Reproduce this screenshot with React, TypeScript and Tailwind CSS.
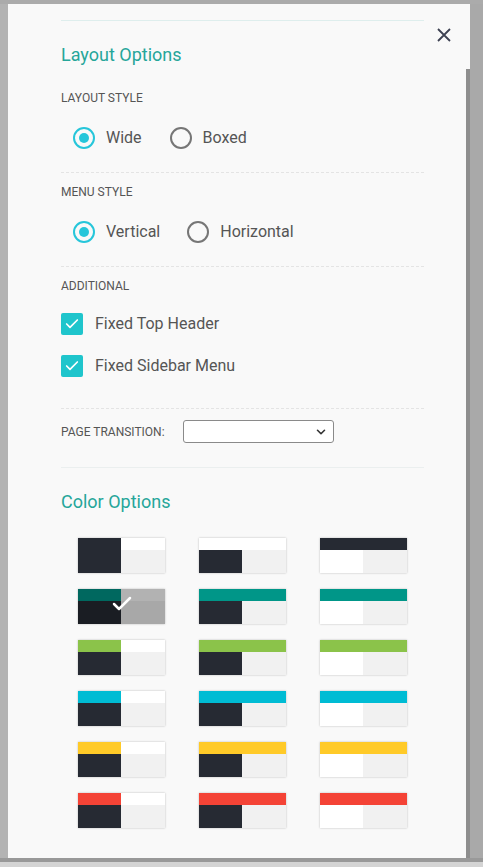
import { Check, ChevronDown } from 'lucide-react';

const accents = [
  { header: 'bg-[#262a33]', top: 'bg-white', alt: 'bg-[#262a33]' },
  { header: 'bg-[#009688]', top: 'bg-[#009688]', alt: 'bg-[#009688]' },
  { header: 'bg-[#8bc34a]', top: 'bg-[#8bc34a]', alt: 'bg-[#8bc34a]' },
  { header: 'bg-[#00bcd4]', top: 'bg-[#00bcd4]', alt: 'bg-[#00bcd4]' },
  { header: 'bg-[#ffca28]', top: 'bg-[#ffca28]', alt: 'bg-[#ffca28]' },
  { header: 'bg-[#f44336]', top: 'bg-[#f44336]', alt: 'bg-[#f44336]' },
];

const Radio = ({ label, checked }: { label: string; checked?: boolean }) => (
  <label className="flex items-center gap-[11px] h-[22px]">
    <span
      className={`w-[22px] h-[22px] rounded-full border-2 flex items-center justify-center ${
        checked ? 'border-[#26c6da]' : 'border-[#767676]'
      }`}
    >
      {checked && <span className="w-[10px] h-[10px] rounded-full bg-[#26c6da]" />}
    </span>
    <span className="text-[16px] leading-[22px] text-[#555]">{label}</span>
  </label>
);

const CheckRow = ({ label }: { label: string }) => (
  <label className="flex items-center gap-3 h-[22px]">
    <span className="w-[22px] h-[22px] rounded-[2px] bg-[#1fc5cc] flex items-center justify-center">
      <Check className="w-[16px] h-[16px] text-white" strokeWidth={2.5} />
    </span>
    <span className="text-[16px] leading-[22px] text-[#555]">{label}</span>
  </label>
);

const SectionLabel = ({ children }: { children: string }) => (
  <div className="text-[12px] leading-4 text-[#555] uppercase">{children}</div>
);

const Swatch = ({ kind, row }: { kind: number; row: number }) => {
  const a = accents[row];
  const selected = kind === 0 && row === 1;
  return (
    <div className="relative w-[87px] h-[35px] grid grid-cols-[43px_44px] grid-rows-[12px_23px] shadow-[0_0_2px_rgba(0,0,0,0.25)]">
      {kind === 0 && (
        <>
          <div className={row === 0 ? 'bg-[#262a33]' : a.alt} />
          <div className="bg-white" />
          <div className="bg-[#262a33]" />
          <div className="bg-[#f1f1f1]" />
        </>
      )}
      {kind === 1 && (
        <>
          <div className={`col-span-2 ${a.top}`} />
          <div className="bg-[#262a33]" />
          <div className="bg-[#f1f1f1]" />
        </>
      )}
      {kind === 2 && (
        <>
          <div className={`col-span-2 ${a.header}`} />
          <div className="bg-white" />
          <div className="bg-[#f1f1f1]" />
        </>
      )}
      {selected && (
        <div className="absolute inset-0 bg-black/30 flex items-center justify-center">
          <Check className="w-[24px] h-[24px] text-white -mt-[6px]" strokeWidth={2.5} />
        </div>
      )}
    </div>
  );
};

export default function App() {
  return (
    <div className="w-[483px] h-[867px] bg-[#ababab] flex flex-col overflow-hidden font-['Roboto',sans-serif]">
      <div className="h-1 shrink-0" />
      <div className="flex h-[854px] shrink-0">
        <div className="w-2 shrink-0 bg-[#b3b3b3]" />
        <div className="relative w-[462px] bg-[#f9f9f9] flex">
          <div className="flex-1 pl-[53px] pr-[42px]">
            <div className="mt-4 h-px bg-[#deeeed]" />
            <h2 className="mt-[22px] text-[18px] leading-6 text-[#26a69a]">Layout Options</h2>

            <div className="mt-[23px]">
              <SectionLabel>Layout Style</SectionLabel>
            </div>
            <div className="mt-[21px] pl-3 flex gap-7">
              <Radio label="Wide" checked />
              <Radio label="Boxed" />
            </div>
            <div className="mt-[23px] border-t border-dashed border-[#e4e4e4]" />

            <div className="mt-[11px]">
              <SectionLabel>Menu Style</SectionLabel>
            </div>
            <div className="mt-[21px] pl-3 flex gap-[27px]">
              <Radio label="Vertical" checked />
              <Radio label="Horizontal" />
            </div>
            <div className="mt-[23px] border-t border-dashed border-[#e4e4e4]" />

            <div className="mt-[11px]">
              <SectionLabel>Additional</SectionLabel>
            </div>
            <div className="mt-[19px] flex flex-col gap-5">
              <CheckRow label="Fixed Top Header" />
              <CheckRow label="Fixed Sidebar Menu" />
            </div>
            <div className="mt-[31px] border-t border-dashed border-[#e4e4e4]" />

            <div className="mt-[11px] flex items-center h-[23px]">
              <div className="w-[122px] text-[12px] leading-4 text-[#555]">PAGE TRANSITION:</div>
              <div className="w-[151px] h-[23px] bg-white border border-[#8a8a8a] rounded-[3px] flex items-center justify-end pr-[5px]">
                <ChevronDown className="w-[14px] h-[14px] text-[#333]" strokeWidth={2.75} />
              </div>
            </div>
            <div className="mt-6 h-px bg-[#ebefef]" />

            <h2 className="mt-[22px] text-[18px] leading-6 text-[#26a69a]">Color Options</h2>
            <div className="mt-6 grid grid-cols-3 gap-y-4 justify-items-center">
              {accents.map((_, row) =>
                [0, 1, 2].map((kind) => <Swatch key={`${row}-${kind}`} kind={kind} row={row} />)
              )}
            </div>
          </div>
          <div className="w-1 mt-[65px] bg-[#8e8e8e]" />

          <button className="absolute top-[21px] right-4 w-5 h-5 flex items-center justify-center text-[#3d4152]">
            <svg width="14" height="14" viewBox="0 0 14 14" fill="none" stroke="currentColor" strokeWidth="1.8">
              <path d="M1 1L13 13M13 1L1 13" />
            </svg>
          </button>
        </div>
        <div className="flex-1 bg-[#a9a9a9]" />
      </div>
      <div className="h-1 shrink-0 bg-[#999]" />
      <div className="flex-1 bg-[#d4d4d4]" />
    </div>
  );
}
